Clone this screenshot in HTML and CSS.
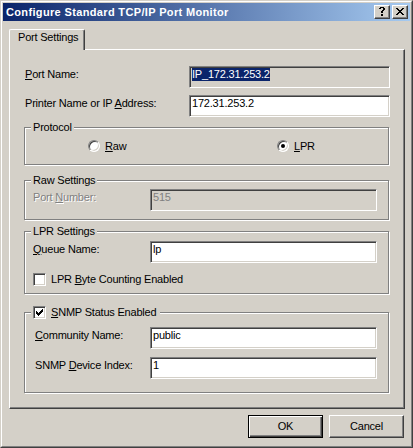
FILE: index.html
```html
<!DOCTYPE html>
<html>
<head>
<meta charset="utf-8">
<title>Configure Standard TCP/IP Port Monitor</title>
<link rel="stylesheet" href="styles.css">
</head>
<body>
<div class="window">
  <div class="frame">
    <div class="titlebar">
      <span class="title">Configure Standard TCP/IP Port Monitor</span>
      <span class="cbtn">
        <svg width="14" height="12" viewBox="1 1 14 12" shape-rendering="crispEdges">
          <rect x="6" y="2" width="4" height="1"/>
          <rect x="5" y="3" width="2" height="1"/>
          <rect x="9" y="3" width="2" height="1"/>
          <rect x="9" y="4" width="2" height="1"/>
          <rect x="8" y="5" width="2" height="1"/>
          <rect x="7" y="6" width="2" height="1"/>
          <rect x="7" y="7" width="2" height="1"/>
          <rect x="7" y="9" width="2" height="2"/>
        </svg>
      </span>
      <span class="cbtn">
        <svg width="14" height="12" viewBox="1 1 14 12" shape-rendering="crispEdges">
          <rect x="4" y="3" width="2" height="1"/><rect x="10" y="3" width="2" height="1"/>
          <rect x="5" y="4" width="2" height="1"/><rect x="9" y="4" width="2" height="1"/>
          <rect x="6" y="5" width="4" height="1"/>
          <rect x="7" y="6" width="2" height="1"/>
          <rect x="6" y="7" width="4" height="1"/>
          <rect x="5" y="8" width="2" height="1"/><rect x="9" y="8" width="2" height="1"/>
          <rect x="4" y="9" width="2" height="1"/><rect x="10" y="9" width="2" height="1"/>
        </svg>
      </span>
    </div>

    <div class="client">
      <div class="tabs">
        <div class="tab">Port Settings</div>
      </div>

      <div class="panel">
        <div class="row">
          <span class="label"><u>P</u>ort Name:</span>
          <span class="edit wide readonly"><span class="sel">IP_172.31.253.2</span></span>
        </div>
        <div class="row row-gap">
          <span class="label">Printer Name or IP <u>A</u>ddress:</span>
          <span class="edit wide">172.31.253.2</span>
        </div>

        <div class="group group-protocol">
          <span class="legend">Protocol</span>
          <div class="radios">
            <span class="option"><span class="radio"></span><span><u>R</u>aw</span></span>
            <span class="option"><span class="radio checked"></span><span><u>L</u>PR</span></span>
          </div>
        </div>

        <div class="group group-raw">
          <span class="legend">Raw Settings</span>
          <div class="grow">
            <span class="glabel disabled">Port <u>N</u>umber:</span>
            <span class="edit narrow disabled-edit">515</span>
          </div>
        </div>

        <div class="group group-lpr">
          <span class="legend">LPR Settings</span>
          <div class="grow">
            <span class="glabel"><u>Q</u>ueue Name:</span>
            <span class="edit narrow">lp</span>
          </div>
          <div class="checkrow">
            <span class="check"></span>
            <span>LPR <u>B</u>yte Counting Enabled</span>
          </div>
        </div>

        <div class="group group-snmp">
          <span class="legend legend-check">
            <span class="check">
              <svg width="7" height="7" viewBox="0 0 7 7" shape-rendering="crispEdges">
                <rect x="6" y="0" width="1" height="1"/>
                <rect x="5" y="1" width="2" height="1"/>
                <rect x="0" y="2" width="1" height="1"/><rect x="4" y="2" width="3" height="1"/>
                <rect x="0" y="3" width="2" height="1"/><rect x="3" y="3" width="3" height="1"/>
                <rect x="0" y="4" width="5" height="1"/>
                <rect x="1" y="5" width="3" height="1"/>
                <rect x="2" y="6" width="1" height="1"/>
              </svg>
            </span>
            <span><u>S</u>NMP Status Enabled</span>
          </span>
          <div class="grow">
            <span class="glabel"><u>C</u>ommunity Name:</span>
            <span class="edit narrow">public</span>
          </div>
          <div class="grow grow-gap">
            <span class="glabel">SNMP <u>D</u>evice Index:</span>
            <span class="edit narrow">1</span>
          </div>
        </div>
      </div>

      <div class="buttons">
        <button class="btn default">OK</button>
        <button class="btn">Cancel</button>
      </div>
    </div>
  </div>
</div>
</body>
</html>
```

FILE: styles.css
```css
html, body {
  margin: 0;
  padding: 0;
}

body {
  width: 413px;
  height: 448px;
  background: #d4d0c8;
  font-family: "Liberation Sans", Arial, sans-serif;
  font-size: 11px;
  line-height: 13px;
  letter-spacing: -0.2px;
  color: #000;
}

u {
  text-decoration: underline;
  text-underline-offset: 1px;
}

.window {
  box-sizing: border-box;
  width: 413px;
  height: 448px;
  border: 1px solid;
  border-color: #d4d0c8 #404040 #404040 #d4d0c8;
  background: #d4d0c8;
}

.frame {
  box-sizing: border-box;
  height: 100%;
  border: 1px solid;
  border-color: #fff #808080 #808080 #fff;
  padding: 1px;
  display: flex;
  flex-direction: column;
}

/* Title bar */
.titlebar {
  height: 18px;
  flex: none;
  display: flex;
  align-items: center;
  padding: 0 2px 0 2px;
  background: linear-gradient(to right, #0a246a, #a6caf0);
}

.title {
  flex: 1;
  color: #fff;
  font-weight: bold;
  letter-spacing: 0.35px;
  white-space: nowrap;
  padding-left: 1px;
}

.cbtn {
  box-sizing: border-box;
  width: 16px;
  height: 14px;
  margin-left: 2px;
  background: #d4d0c8;
  border: 1px solid;
  border-color: #fff #404040 #404040 #fff;
  box-shadow: inset -1px -1px 0 #808080;
  display: flex;
}

.cbtn svg {
  display: block;
  fill: #000;
}

/* Client */
.client {
  flex: 1;
  display: flex;
  flex-direction: column;
  padding: 8px 5px 0 6px;
}

.tabs {
  height: 20px;
  display: flex;
  position: relative;
  z-index: 1;
}

.tab {
  box-sizing: border-box;
  width: 76px;
  height: 21px;
  padding: 1px 0 0 8px;
  background: #d4d0c8;
  border-left: 1px solid #fff;
  border-top: 1px solid #fff;
  border-right: 1px solid #404040;
  box-shadow: inset -1px 0 0 #808080;
  border-top-left-radius: 2px;
  border-top-right-radius: 2px;
}

.panel {
  box-sizing: border-box;
  height: 360px;
  flex: none;
  border: 1px solid;
  border-color: #fff #404040 #404040 #fff;
  box-shadow: inset -1px -1px 0 #808080;
  padding: 16px 13px 0 14px;
  display: flex;
  flex-direction: column;
}

.row {
  display: flex;
  height: 22px;
  width: 366px;
}

.row-gap {
  margin-top: 7px;
}

.label {
  flex: 1;
  padding: 2px 0 0 1px;
  white-space: nowrap;
}

/* Edit controls */
.edit {
  box-sizing: border-box;
  height: 22px;
  border: 1px solid;
  border-color: #808080 #fff #fff #808080;
  box-shadow: inset 1px 1px 0 #404040, inset -1px -1px 0 #d4d0c8;
  background: #fff;
  padding: 1px 0 0 2px;
  white-space: nowrap;
  overflow: hidden;
}

.wide {
  width: 201px;
}

.narrow {
  width: 227px;
}

.readonly,
.disabled-edit {
  background: #d4d0c8;
}

.disabled-edit {
  color: #808080;
}

.sel {
  display: inline-block;
  background: #0a246a;
  color: #fff;
  height: 13px;
}

.disabled {
  color: #808080;
  text-shadow: 1px 1px 0 #fff;
}

/* Group boxes */
.group {
  position: relative;
  box-sizing: border-box;
  width: 365px;
  border: 1px solid #808080;
  box-shadow: 1px 1px 0 #fff, inset 1px 1px 0 #fff;
  flex: none;
}

.legend {
  position: absolute;
  top: -7px;
  left: 6px;
  padding: 0 2px;
  background: #d4d0c8;
  white-space: nowrap;
  display: flex;
  align-items: center;
  gap: 5px;
}

.legend-check {
  padding-right: 4px;
}

.group-protocol {
  margin-top: 10px;
  height: 38px;
  display: flex;
  align-items: center;
}

.radios {
  display: grid;
  grid-template-columns: 189px auto;
  padding-left: 63px;
}

.option {
  display: flex;
  align-items: center;
  gap: 5px;
}

.radio {
  box-sizing: border-box;
  width: 12px;
  height: 12px;
  border-radius: 50%;
  border: 1px solid;
  border-color: #808080 #fff #fff #808080;
  box-shadow: inset 1px 1px 0 #404040, inset -1px -1px 0 #d4d0c8;
  background: #fff;
  display: flex;
  align-items: center;
  justify-content: center;
}

.radio.checked::after {
  content: "";
  width: 4px;
  height: 4px;
  border-radius: 50%;
  background: #000;
}

.group-raw {
  margin-top: 15px;
  height: 40px;
  padding: 8px 11px 0 8px;
}

.group-lpr {
  margin-top: 11px;
  height: 63px;
  padding: 9px 11px 0 8px;
}

.group-snmp {
  margin-top: 18px;
  height: 81px;
  padding: 14px 11px 0 10px;
}

.grow {
  display: flex;
  height: 22px;
}

.grow-gap {
  margin-top: 8px;
}

.glabel {
  flex: 1;
  padding-top: 2px;
  white-space: nowrap;
}

.checkrow {
  margin-top: 10px;
  display: flex;
  align-items: center;
  gap: 5px;
  height: 13px;
}

.check {
  box-sizing: border-box;
  width: 13px;
  height: 13px;
  flex: none;
  border: 1px solid;
  border-color: #808080 #fff #fff #808080;
  box-shadow: inset 1px 1px 0 #404040, inset -1px -1px 0 #d4d0c8;
  background: #fff;
}

.check svg {
  display: block;
  margin: 2px 0 0 2px;
  fill: #000;
}

/* Buttons */
.buttons {
  display: flex;
  justify-content: flex-end;
  gap: 6px;
  margin-top: 6px;
  padding-right: 1px;
}

.btn {
  box-sizing: border-box;
  width: 75px;
  height: 23px;
  margin: 0;
  padding: 0;
  font: inherit;
  letter-spacing: inherit;
  color: #000;
  background: #d4d0c8;
  border: 1px solid;
  border-color: #fff #404040 #404040 #fff;
  box-shadow: inset -1px -1px 0 #808080;
}

.btn.default {
  border-color: #000;
  box-shadow: inset 1px 1px 0 #fff, inset -1px -1px 0 #404040, inset -2px -2px 0 #808080;
}
```
